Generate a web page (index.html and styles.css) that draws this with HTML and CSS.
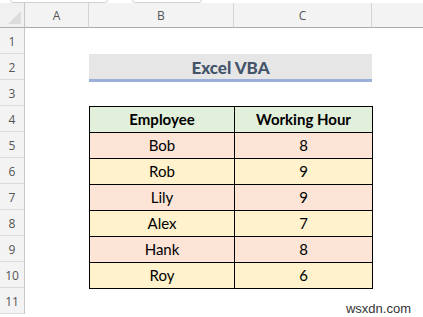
FILE: index.html
```html
<!DOCTYPE html>
<html>
<head>
<meta charset="utf-8">
<link rel="stylesheet" href="styles.css">
</head>
<body>
<div class="topbar">
  <div class="tb-box tb-box1"></div>
  <div class="tb-box tb-box2"></div>
</div>
<div class="sheet">
  <div class="corner"><span class="tri"></span></div>
  <div class="colhead">A</div>
  <div class="colhead">B</div>
  <div class="colhead">C</div>
  <div class="colhead last"></div>

  <div class="rowhead r1">1</div>
  <div class="rowhead r2">2</div>
  <div class="rowhead r3">3</div>
  <div class="rowhead r4">4</div>
  <div class="rowhead r5">5</div>
  <div class="rowhead r6">6</div>
  <div class="rowhead r7">7</div>
  <div class="rowhead r8">8</div>
  <div class="rowhead r9">9</div>
  <div class="rowhead r10">10</div>
  <div class="rowhead r11">11</div>

  <div class="title">Excel VBA</div>

  <table class="data">
    <tr class="hdr"><th>Employee</th><th>Working Hour</th></tr>
    <tr class="pink"><td>Bob</td><td>8</td></tr>
    <tr class="yellow"><td>Rob</td><td>9</td></tr>
    <tr class="pink"><td>Lily</td><td>9</td></tr>
    <tr class="yellow"><td>Alex</td><td>7</td></tr>
    <tr class="pink"><td>Hank</td><td>8</td></tr>
    <tr class="yellow"><td>Roy</td><td>6</td></tr>
  </table>

  <div class="watermark">wsxdn.com</div>
</div>
</body>
</html>
```
FILE: styles.css
```css
html, body {
  margin: 0;
  padding: 0;
  background: #ffffff;
  width: 423px;
  height: 317px;
  overflow: hidden;
}

.topbar {
  height: 3px;
  position: relative;
  background: #ffffff;
}
.tb-box {
  position: absolute;
  top: -6px;
  height: 7px;
  border: 1px solid #d0d0d0;
  border-radius: 3px;
  background: #fff;
}
.tb-box1 { left: 10px; width: 96px; }
.tb-box2 { left: 132px; width: 68px; }

.sheet {
  display: grid;
  grid-template-columns: 25px 64px 145px 138px 51px;
  grid-template-rows: 25px repeat(11, 26px);
  font-family: "Lato", "Open Sans", sans-serif;
}

.corner {
  grid-row: 1;
  grid-column: 1;
  background: #f0f0f0;
  border-bottom: 1px solid #ababab;
  border-right: 1px solid #c6c6c6;
  box-sizing: border-box;
  position: relative;
}
.tri {
  position: absolute;
  right: 3px;
  bottom: 3px;
  width: 0;
  height: 0;
  border-left: 13px solid transparent;
  border-bottom: 13px solid #dcdcdc;
}

.colhead {
  grid-row: 1;
  background: #f3f3f3;
  border-bottom: 1px solid #ababab;
  border-right: 1px solid #d4d4d4;
  box-sizing: border-box;
  display: flex;
  align-items: center;
  justify-content: center;
  font-family: "Open Sans", "Noto Sans", sans-serif;
  font-size: 12px;
  color: #555555;
  padding-top: 1px;
}
.colhead.last { border-right: none; }

.rowhead {
  grid-column: 1;
  background: #f3f3f3;
  border-right: 1px solid #c6c6c6;
  border-bottom: 1px solid #dadada;
  box-sizing: border-box;
  display: flex;
  align-items: center;
  justify-content: center;
  font-family: "Open Sans", "Noto Sans", sans-serif;
  font-size: 12px;
  color: #555555;
  padding-top: 2px;
}
.r1 { grid-row: 2; }
.r2 { grid-row: 3; }
.r3 { grid-row: 4; }
.r4 { grid-row: 5; }
.r5 { grid-row: 6; }
.r6 { grid-row: 7; }
.r7 { grid-row: 8; }
.r8 { grid-row: 9; }
.r9 { grid-row: 10; }
.r10 { grid-row: 11; }
.r11 { grid-row: 12; }

.title {
  grid-row: 3;
  grid-column: 3 / 5;
  background: #e7e6e6;
  border-bottom: 3px solid #9bb0d8;
  box-sizing: border-box;
  height: 28px;
  display: flex;
  align-items: center;
  justify-content: center;
  font-weight: 900;
  font-size: 17px;
  color: #44546a;
  padding-top: 2px;
}

.data {
  grid-row: 5 / 12;
  grid-column: 3 / 5;
  border-collapse: collapse;
  width: 284px;
  table-layout: fixed;
  margin-top: 0;
}
.data th, .data td {
  border: 1px solid #000000;
  height: 25px;
  padding: 0;
  text-align: center;
  font-size: 15px;
  color: #000000;
  line-height: 1;
}
.data th:first-child, .data td:first-child { width: 144px; }
.data th { font-weight: 700; }
.data tr.hdr { background: #e2efda; }
.data tr.pink { background: #fce4d6; }
.data tr.yellow { background: #fff2cc; }

.watermark {
  grid-row: 12;
  grid-column: 4 / 6;
  justify-self: end;
  align-self: end;
  margin-right: 12px;
  margin-bottom: -2px;
  font-family: "Liberation Sans", Arial, sans-serif;
  font-size: 13px;
  color: #333333;
}
```
